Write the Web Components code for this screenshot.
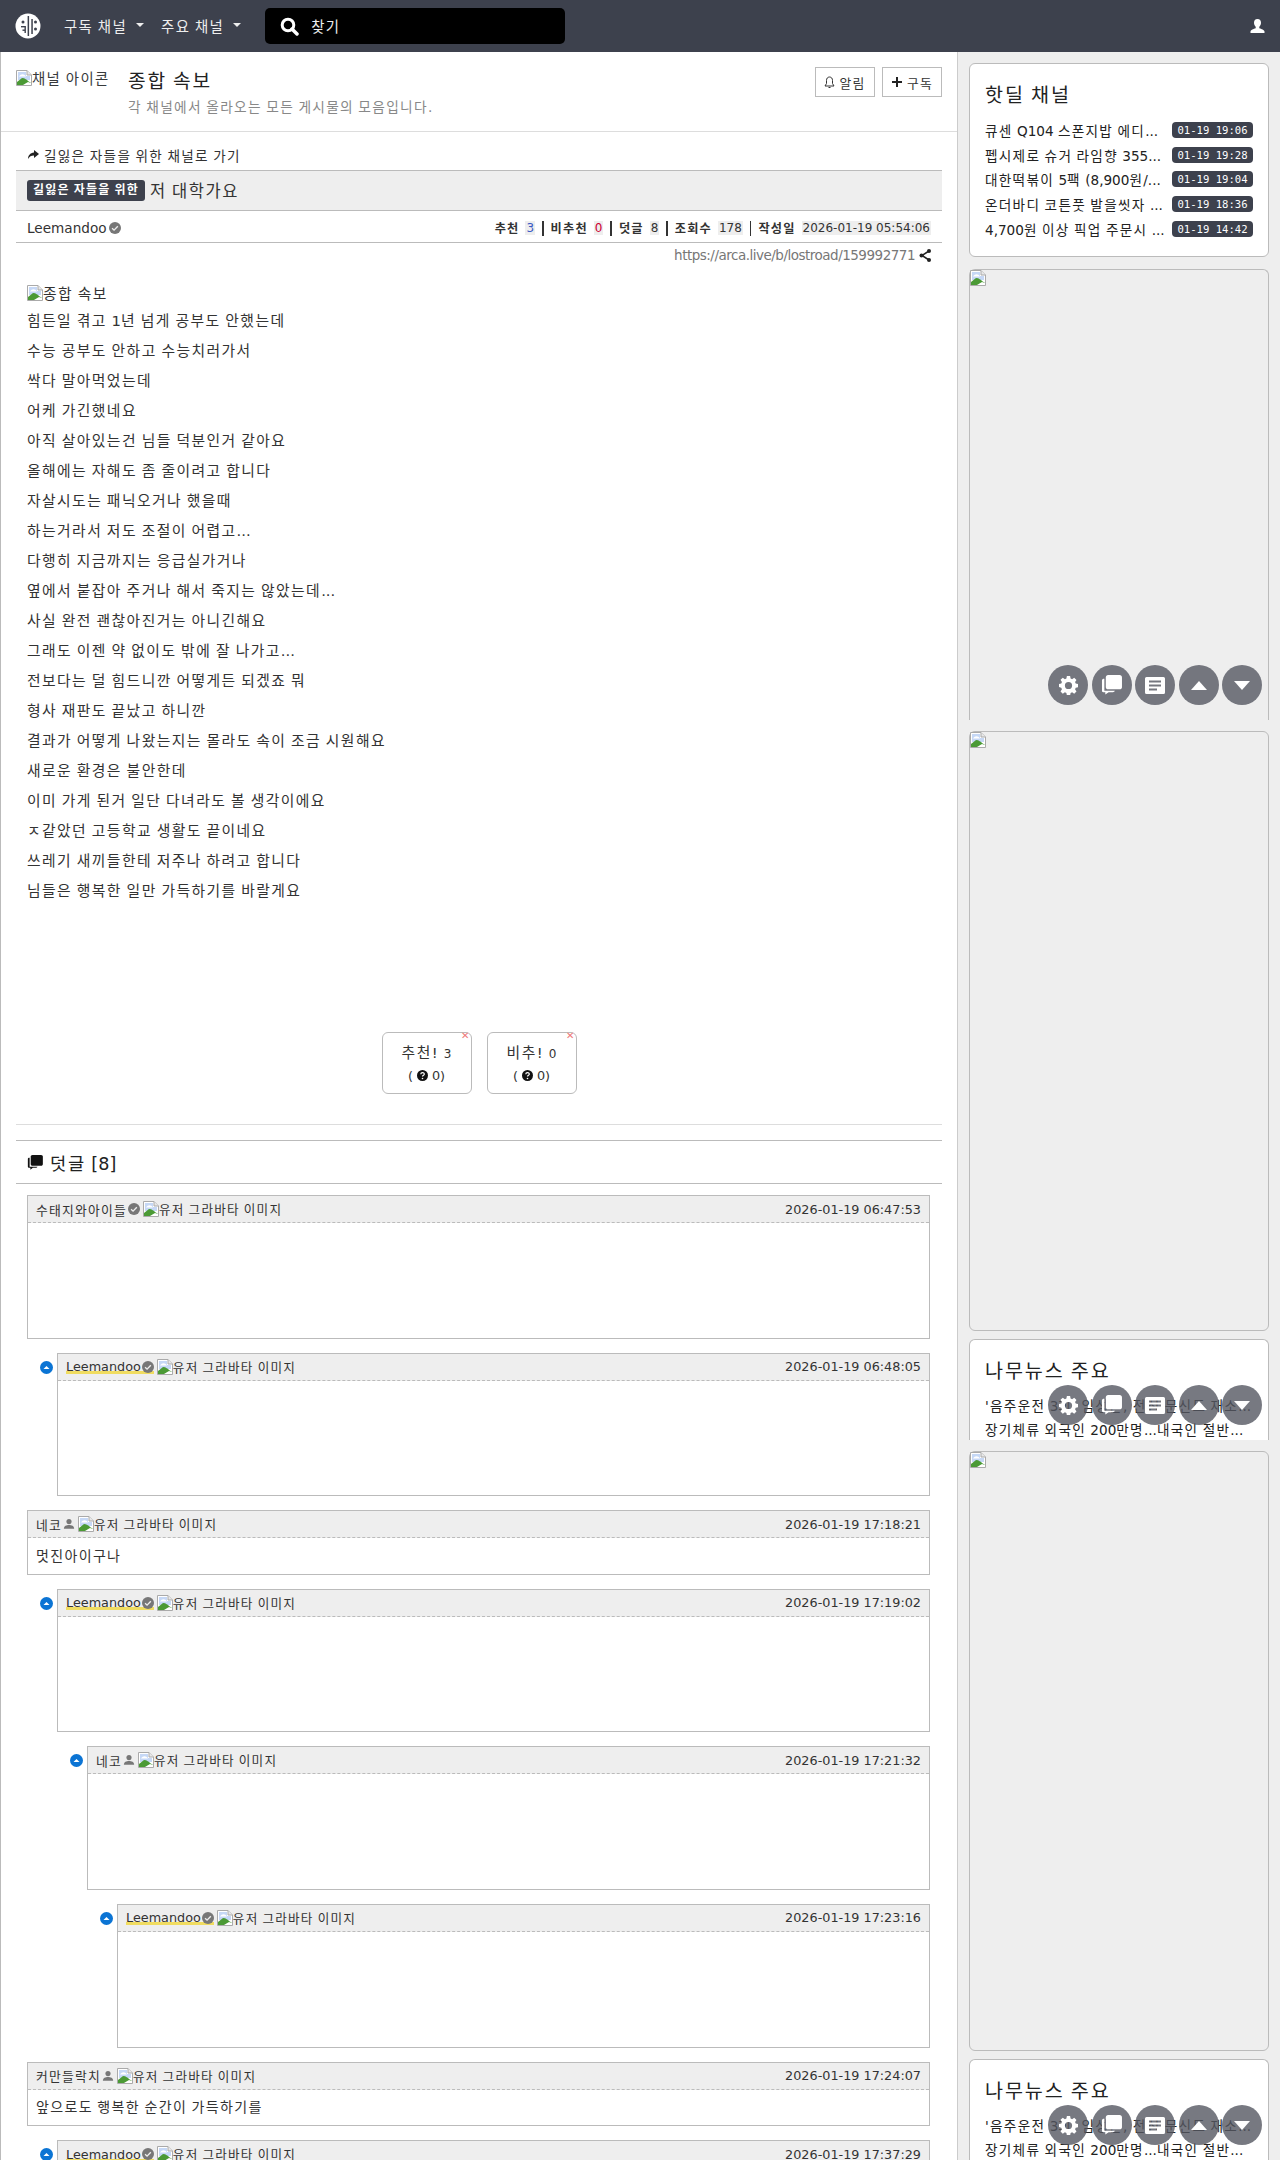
<!DOCTYPE html>
<html lang="ko">
<head>
<meta charset="utf-8">
<title>저 대학가요</title>
<style>
	html, body {
		margin: 0;
		height: 2160px;
		overflow: hidden;
		background: #eee;
		font-family: "DejaVu Sans", "Noto Sans CJK KR", sans-serif;
		font-size: 14px;
		color: #373a3c;
	}
	.lat { letter-spacing: 0; word-spacing: 0; }
</style>
</head>
<body>
<arca-page>
	<arca-topbar slot="top"></arca-topbar>

	<channel-head slot="main" title="종합 속보" sub="각 채널에서 올라오는 모든 게시물의 모음입니다."></channel-head>
	<article-head slot="main" channel="길잃은 자들을 위한" subject="저 대학가요" author="Leemandoo"
		up="3" down="0" replies="8" views="178" date="2026-01-19 05:54:06"
		url="https://arca.live/b/lostroad/159992771"></article-head>
	<article-body slot="main">
		<p class="pic"><broken-img alt="종합 속보" size="14.8"></broken-img></p>
		<p>힘든일 겪고 <span class="lat">1</span>년 넘게 공부도 안했는데</p>
		<p>수능 공부도 안하고 수능치러가서</p>
		<p>싹다 말아먹었는데</p>
		<p>어케 가긴했네요</p>
		<p>아직 살아있는건 님들 덕분인거 같아요</p>
		<p>올해에는 자해도 좀 줄이려고 합니다</p>
		<p>자살시도는 패닉오거나 했을때</p>
		<p>하는거라서 저도 조절이 어렵고<span class="lat">...</span></p>
		<p>다행히 지금까지는 응급실가거나</p>
		<p>옆에서 붙잡아 주거나 해서 죽지는 않았는데<span class="lat">...</span></p>
		<p>사실 완전 괜찮아진거는 아니긴해요</p>
		<p>그래도 이젠 약 없이도 밖에 잘 나가고<span class="lat">...</span></p>
		<p>전보다는 덜 힘드니깐 어떻게든 되겠죠 뭐</p>
		<p>형사 재판도 끝났고 하니깐</p>
		<p>결과가 어떻게 나왔는지는 몰라도 속이 조금 시원해요</p>
		<p>새로운 환경은 불안한데</p>
		<p>이미 가게 된거 일단 다녀라도 볼 생각이에요</p>
		<p>ㅈ같았던 고등학교 생활도 끝이네요</p>
		<p>쓰레기 새끼들한테 저주나 하려고 합니다</p>
		<p>님들은 행복한 일만 가득하기를 바랄게요</p>
	</article-body>
	<vote-row slot="main" up="3" down="0"></vote-row>
	<reply-head slot="main" count="8"></reply-head>
	<reply-list slot="main">
		<reply-item name="수태지와아이들" kind="check" date="2026-01-19 06:47:53"></reply-item>
		<reply-item name="Leemandoo" kind="check" depth="1" date="2026-01-19 06:48:05"></reply-item>
		<reply-item name="네코" kind="user" date="2026-01-19 17:18:21">멋진아이구나</reply-item>
		<reply-item name="Leemandoo" kind="check" depth="1" date="2026-01-19 17:19:02"></reply-item>
		<reply-item name="네코" kind="user" depth="2" date="2026-01-19 17:21:32"></reply-item>
		<reply-item name="Leemandoo" kind="check" depth="3" date="2026-01-19 17:23:16"></reply-item>
		<reply-item name="커만들락치" kind="user" date="2026-01-19 17:24:07">앞으로도 행복한 순간이 가득하기를</reply-item>
		<reply-item name="Leemandoo" kind="check" depth="1" date="2026-01-19 17:37:29"></reply-item>
	</reply-list>

	<side-card slot="side" heading="핫딜 채널" height="194" gap="12">
		<deal-row date="01-19 19:06">큐센 <span class="lat">Q104</span> 스폰지밥 에디<span class="lat">...</span></deal-row>
		<deal-row date="01-19 19:28">펩시제로 슈거 라임향 <span class="lat">355...</span></deal-row>
		<deal-row date="01-19 19:04">대한떡볶이 <span class="lat">5</span>팩 <span class="lat">(8,900</span>원<span class="lat">/...</span></deal-row>
		<deal-row date="01-19 18:36">온더바디 코튼풋 발을씻자 <span class="lat">...</span></deal-row>
		<deal-row date="01-19 14:42"><span class="lat">4,700</span>원 이상 픽업 주문시 <span class="lat">...</span></deal-row>
	</side-card>
	<side-ad slot="side" height="451" gap="11" cut></side-ad>
	<side-ad slot="side" height="600" gap="8"></side-ad>
	<side-card slot="side" heading="나무뉴스 주요" height="101" gap="11" cut>
		<news-row>'음주운전 <span class="lat">3</span>회' 임성근, 전신 문신도 재소<span class="lat">...</span></news-row>
		<news-row>장기체류 외국인 <span class="lat">200</span>만명<span class="lat">...</span>내국인 절반<span class="lat">...</span></news-row>
	</side-card>
	<side-ad slot="side" height="600" gap="8"></side-ad>
	<side-card slot="side" heading="나무뉴스 주요" height="101" gap="0" cut>
		<news-row>'음주운전 <span class="lat">3</span>회' 임성근, 전신 문신도 재소<span class="lat">...</span></news-row>
		<news-row>장기체류 외국인 <span class="lat">200</span>만명<span class="lat">...</span>내국인 절반<span class="lat">...</span></news-row>
	</side-card>

	<float-tools slot="over" top="665"></float-tools>
	<float-tools slot="over" top="1385"></float-tools>
	<float-tools slot="over" top="2105"></float-tools>
</arca-page>

<script>
// hangul in the reference runs about 1em wide, Noto CJK is .92em, so korean text gets this spacing
const KO = 'letter-spacing: .096em; word-spacing: -.096em;';

const BROKEN_ICON = `<svg width="16" height="16" viewBox="0 0 16 16" style="flex:none">
	<path d="M.5.5H11L15.500 5v10.500H.5z" fill="#fff" stroke="#aaa"/>
	<path d="M11 .5V5h4.500" fill="#e8e8e8" stroke="#aaa"/>
	<path d="M2 2h8v4h4v4H2z" fill="#c6d8f6"/>
	<path d="M3 6.500c2-3 5-3 7 0z" fill="#fff"/>
	<path d="M1 15v-3l5-4c3 0 5 2 6 3l3 2v2z" fill="#4b9a35"/>
	<path d="M7 15l5-3 3 1v2z" fill="#fff"/>
</svg>`;
const CHECK_ICON = `<svg width="12" height="12" viewBox="0 0 14 14" style="flex:none"><circle cx="7" cy="7" r="7" fill="#777"/><path d="M3.600 7.300l2.300 2.200 4.400-4.600" fill="none" stroke="#eee" stroke-width="1.600"/></svg>`;
const USER_ICON = `<svg width="12" height="12" viewBox="0 0 14 14" style="flex:none"><circle cx="7" cy="4.200" r="3" fill="#777"/><path d="M1 12.500c0-3 3-4.200 6-4.200s6 1.200 6 4.200z" fill="#777"/></svg>`;
const QUESTION_ICON = `<svg width="11" height="11" viewBox="0 0 11 11" style="flex:none"><circle cx="5.500" cy="5.500" r="5.500" fill="#111"/><path d="M3.800 4.200c0-2 3.500-2 3.500 0 0 1.200-1.800 1-1.800 2.400" fill="none" stroke="#fff" stroke-width="1.200"/><circle cx="5.500" cy="8.500" r=".8" fill="#fff"/></svg>`;
const BUBBLES = `<path d="M7.500 0H19.500C21 0 22 1 22 2.500V12.500C22 14 21 15 19.500 15H7.500C6 15 5 14 5 12.500V2.500C5 1 6 0 7.500 0z"/><path d="M1 5.500C1 4.700 1.700 4 3.500 4V16.500H14.500C14 17.500 13.500 18 12.500 18H8L4.500 20.500V18H2.500C1.500 18 1 17.500 1 16.500z"/>`;

function define(name, html, init) {
	customElements.define(name, class extends HTMLElement {
		constructor() {
			super();
			this.attachShadow({ mode: 'open' });
		}
		connectedCallback() {
			const attr = (key, fallback = '') => this.hasAttribute(key) ? this.getAttribute(key) : fallback;
			this.shadowRoot.innerHTML = html(attr);
			if (init) init(this);
		}
	});
}

define('arca-page', () => `
	<style>
		:host { display: block; position: relative; height: 2160px; overflow: hidden; }
		.cols { display: grid; grid-template-columns: 958px 1fr; }
		main { background: #fff; border-left: 1px solid #bbb; border-right: 1px solid #ccc; height: 2108px; overflow: hidden; }
		aside { padding: 11px 11px 0; height: 2097px; overflow: hidden; }
	</style>
	<slot name="top"></slot>
	<div class="cols">
		<main><slot name="main"></slot></main>
		<aside><slot name="side"></slot></aside>
	</div>
	<slot name="over"></slot>
`);

define('arca-topbar', () => `
	<style>
		:host { display: flex; align-items: center; height: 52px; background: #3d414d; color: #eee; font-size: 14.400px; }
		.logo { margin-left: 15px; width: 26px; height: 26px; flex: none; }
		.nav { display: flex; align-items: center; margin-left: 17px; padding-bottom: 2px; ${KO} }
		.nav::after { content: ""; margin-left: 9px; border: 4px solid transparent; border-top-color: #eee; border-bottom: 0; }
		.logo + .nav { margin-left: 23px; }
		.find { display: flex; align-items: center; gap: 12px; width: 300px; height: 36px; margin-left: 24px; padding: 0 0 0 15px; box-sizing: border-box; background: #000; border-radius: 5px; ${KO} }
		.find span { padding-bottom: 2px; }
		.me { margin-left: auto; margin-right: 15px; }
	</style>
	<svg class="logo" viewBox="0 0 26 26">
		<circle cx="13" cy="13" r="12.500" fill="#fff"/>
		<g fill="#3d414d">
			<rect x="12.600" y="3" width="1.500" height="20"/>
			<rect x="16.300" y="6" width="1.500" height="15"/>
			<rect x="9.500" y="13" width="1.400" height="7"/>
			<rect x="6" y="13" width="4" height="1.400"/>
			<rect x="7.500" y="16.500" width="2.500" height="1.400"/>
			<circle cx="8" cy="9" r="1.500"/>
			<circle cx="20.500" cy="9" r="1.500"/>
			<circle cx="20.500" cy="16" r="1.500"/>
		</g>
	</svg>
	<span class="nav">구독 채널</span>
	<span class="nav">주요 채널</span>
	<div class="find">
		<svg width="19" height="19" viewBox="0 0 19 19"><circle cx="8" cy="8" r="5.800" fill="none" stroke="#fff" stroke-width="3"/><path d="M12 12l5 5" stroke="#fff" stroke-width="3.500" stroke-linecap="round"/></svg>
		<span>찾기</span>
	</div>
	<svg class="me" width="15" height="15" viewBox="0 0 15 15"><path d="M7.500 0c2.400 0 3.500 1.700 3.500 3.800 0 1.700-.8 3.200-1.700 4v1.400c2 .7 5.200 1.600 5.200 3.300V14H.5v-1.500c0-1.700 3.200-2.600 5.200-3.300V7.800c-.9-.8-1.700-2.300-1.700-4C4 1.700 5.100 0 7.500 0z" fill="#fff"/></svg>
`);

define('broken-img', attr => `
	<style>
		:host { display: inline-flex; align-items: flex-start; line-height: 16px; font-size: ${attr('size', '12.600')}px; ${KO} }
		span { position: relative; top: 1px; }
	</style>
	${BROKEN_ICON}<span>${attr('alt')}</span>
`);

define('channel-head', attr => `
	<style>
		:host { display: flex; height: 80px; box-sizing: border-box; border-bottom: 1px solid #ddd; padding: 15px 15px 0; }
		.icon { width: 96px; height: 18px; margin-top: 3px; overflow: hidden; white-space: nowrap; flex: none; }
		.txt { margin-left: 16px; flex: 1; }
		.title { font-size: 19.200px; line-height: 30px; color: #222; ${KO} }
		.sub { font-size: 13.700px; line-height: 20px; color: #888; ${KO} }
		.btns { display: flex; gap: 7px; }
		.btn { display: flex; align-items: center; justify-content: center; gap: 4px; width: 60px; height: 30px; box-sizing: border-box; border: 1px solid #bbb; font-size: 12.800px; color: #333; background: #fff; ${KO} }
	</style>
	<div class="icon"><broken-img alt="채널 아이콘" size="14.400"></broken-img></div>
	<div class="txt"><div class="title">${attr('title')}</div><div class="sub">${attr('sub')}</div></div>
	<div class="btns">
		<span class="btn"><svg width="11" height="13" viewBox="0 0 11 13"><path d="M5.500 1c-2 0-3 1.500-3 3.500v3L1 10h9L8.500 7.500v-3C8.500 2.500 7.500 1 5.500 1z" fill="none" stroke="#333"/><path d="M4.500 11.500h2" stroke="#333"/></svg>알림</span>
		<span class="btn"><svg width="12" height="12" viewBox="0 0 12 12"><path d="M6 1v10M1 6h10" stroke="#222" stroke-width="2"/></svg>구독</span>
	</div>
`);

define('article-head', attr => `
	<style>
		:host { display: block; margin: 0 15px; }
		.back { display: flex; align-items: center; gap: 5px; height: 38px; box-sizing: border-box; padding: 7px 0 0 11px; font-size: 13.600px; color: #333; ${KO} }
		.title { display: flex; align-items: center; gap: 5px; height: 41px; box-sizing: border-box; padding-left: 11px; background: #eee; border-top: 1px solid #bbb; border-bottom: 1px solid #bbb; font-size: 16.500px; color: #333; ${KO} }
		.title span:last-child { padding-bottom: 2px; }
		.badge { background: #3d414d; color: #fff; border-radius: 3px; font-size: 12px; font-weight: 700; line-height: 21px; padding: 0 6px; ${KO} }
		.info { display: flex; align-items: center; height: 32px; box-sizing: border-box; padding: 3px 11px 0; border-bottom: 1px solid #bbb; font-size: 12px; color: #333; }
		.who { display: flex; align-items: center; gap: 2px; font-size: 13.600px; margin-right: auto; }
		b { font-size: 12.200px; margin-right: 6px; ${KO} }
		i { font-style: normal; background: #eee; padding: 0 1px; }
		.sep { width: 1.500px; height: 15px; background: #333; margin: 0 7px; }
		.blue { color: #3b5bc5; } .red { color: #c03; }
		.url { display: flex; justify-content: flex-end; align-items: center; gap: 4px; height: 24px; padding-right: 11px; font-size: 13.500px; color: #777; letter-spacing: -.5px; }
	</style>
	<div class="back"><svg width="12" height="10" viewBox="0 0 12 10"><path d="M7 0l5 4-5 4V5.500C4 5.500 2.500 6.500 1 9c0-3.500 2-6 6-6.500z" fill="#222"/></svg><span>길잃은 자들을 위한 채널로 가기</span></div>
	<div class="title"><span class="badge">${attr('channel')}</span><span>${attr('subject')}</span></div>
	<div class="info">
		<span class="who">${attr('author')}${CHECK_ICON}</span>
		<b>추천</b><i class="blue">${attr('up')}</i><span class="sep"></span>
		<b>비추천</b><i class="red">${attr('down')}</i><span class="sep"></span>
		<b>덧글</b><i>${attr('replies')}</i><span class="sep"></span>
		<b>조회수</b><i>${attr('views')}</i><span class="sep"></span>
		<b>작성일</b><i>${attr('date')}</i>
	</div>
	<div class="url"><span>${attr('url')}</span><svg width="12" height="13" viewBox="0 0 12 13"><path d="M10 2L3 6.500l7 4.500" fill="none" stroke="#222" stroke-width="1.500"/><circle cx="10" cy="2" r="2" fill="#222"/><circle cx="2.500" cy="6.500" r="2" fill="#222"/><circle cx="10" cy="11" r="2" fill="#222"/></svg></div>
`);

define('article-body', () => `
	<style>
		:host { display: block; padding: 18px 26px 0; height: 765px; box-sizing: border-box; color: #333; }
		::slotted(p) { margin: 0; height: 30px; line-height: 30px; font-size: 14.800px; white-space: nowrap; ${KO} }
		::slotted(p.pic) { height: 21px; line-height: 16px; }
	</style>
	<slot></slot>
`);

define('vote-row', attr => `
	<style>
		:host { display: flex; justify-content: center; gap: 15px; height: 93px; margin: 0 15px; box-sizing: border-box; border-bottom: 1px solid #ddd; }
		.v { position: relative; width: 90px; height: 62px; box-sizing: border-box; border: 1px solid #bbb; border-radius: 6px; text-align: center; padding-top: 8px; font-size: 14.800px; color: #333; }
		.l { ${KO} }
		small { font-size: 12px; }
		.n { display: flex; justify-content: center; align-items: center; gap: 4px; font-size: 12.800px; margin-top: 6px; }
		.x { position: absolute; right: 1px; top: -2px; color: #e77; font-size: 10px; line-height: 10px; }
	</style>
	<div class="v"><span class="l">추천!</span> <small>${attr('up')}</small><div class="n">(${QUESTION_ICON}0)</div><span class="x">✕</span></div>
	<div class="v"><span class="l">비추!</span> <small>${attr('down')}</small><div class="n">(${QUESTION_ICON}0)</div><span class="x">✕</span></div>
`);

define('reply-head', attr => `
	<style>
		:host { display: flex; align-items: center; gap: 7px; height: 44px; margin: 15px 15px 0; padding-left: 11px; box-sizing: border-box; border-top: 1px solid #bbb; border-bottom: 1px solid #bbb; font-size: 17.600px; color: #222; }
		.t { ${KO} }
	</style>
	<svg width="16" height="15" viewBox="0 0 22 21" fill="#111">${BUBBLES}</svg>
	<span><span class="t">덧글</span> [${attr('count')}]</span>
`);

define('reply-list', () => `
	<style>:host { display: block; margin: 11px 27px 0 26px; }</style>
	<slot></slot>
`);

define('reply-item', attr => {
	const depth = Number(attr('depth', '0'));
	const name = attr('name');
	const isKo = /[가-힣]/.test(name);
	return `
	<style>
		:host { display: flex; margin-bottom: 14px; }
		.gutter { flex: none; width: ${depth * 30}px; display: ${depth ? 'flex' : 'none'}; justify-content: flex-end; padding-top: 8px; box-sizing: border-box; }
		.gutter svg { margin-right: 4px; }
		.box { flex: 1; border: 1px solid #bbb; background: #fff; }
		.top { display: flex; align-items: center; height: 27px; box-sizing: border-box; padding: 0 8px; background: #eee; border-bottom: 1px dashed #bbb; font-size: 12.800px; color: #333; }
		.name { display: inline-flex; align-items: center; gap: 1px; margin-right: 3px; ${isKo ? KO : ''} }
		.name.mine { background: linear-gradient(transparent 80%, #f0dc60 80%); }
		.date { margin-left: auto; }
		.text { padding: 7.800px 8px; line-height: 20px; font-size: 14px; color: #333; ${KO} }
		.blank { height: 114.600px; }
	</style>
	<div class="gutter"><svg width="13" height="13" viewBox="0 0 13 13"><circle cx="6.500" cy="6.500" r="6.500" fill="#0b74d4"/><path d="M3.500 8h6L6.500 5z" fill="#fff"/></svg></div>
	<div class="box">
		<div class="top">
			<span class="name ${name === 'Leemandoo' ? 'mine' : ''}">${name}${attr('kind') === 'user' ? USER_ICON : CHECK_ICON}</span>
			<broken-img alt="유저 그라바타 이미지"></broken-img>
			<span class="date">${attr('date')}</span>
		</div>
		<div class="body"><div class="text"><slot></slot></div></div>
	</div>`;
}, el => {
	if (!el.textContent.trim()) {
		const body = el.shadowRoot.querySelector('.body');
		body.className = 'blank';
		body.innerHTML = '';
	}
});

define('side-card', attr => `
	<style>
		:host { display: block; height: ${attr('height')}px; margin-bottom: ${attr('gap')}px; box-sizing: border-box; overflow: hidden; background: #fff; border: 1px solid #bbb; border-radius: 6px; ${attr('cut', null) !== null ? 'border-bottom: 0; border-radius: 6px 6px 0 0;' : ''} padding: 17.500px 15px 0; }
		h3 { margin: 0 0 8.100px; font-weight: 400; font-size: 19.600px; line-height: 28px; color: #222; ${KO} }
	</style>
	<h3>${attr('heading')}</h3>
	<slot></slot>
`);

define('deal-row', attr => `
	<style>
		:host { display: flex; align-items: center; justify-content: space-between; height: 24.700px; font-size: 13.600px; color: #222; }
		.t { white-space: nowrap; ${KO} }
		.d { width: 81px; text-align: center; background: #3d414d; color: #fff; border-radius: 4px; font: 10.600px/16px "DejaVu Sans Mono", monospace; }
	</style>
	<span class="t"><slot></slot></span><span class="d">${attr('date')}</span>
`);

define('news-row', () => `
	<style>
		:host { display: block; height: 24px; line-height: 24px; white-space: nowrap; font-size: 13.600px; color: #222; ${KO} }
	</style>
	<slot></slot>
`);

define('side-ad', attr => `
	<style>
		:host { display: block; height: ${attr('height')}px; margin-bottom: ${attr('gap')}px; box-sizing: border-box; background: #eee; border: 1px solid #bbb; border-radius: 6px; ${attr('cut', null) !== null ? 'border-bottom: 0; border-radius: 6px 6px 0 0;' : ''} line-height: 0; }
	</style>
	${BROKEN_ICON}
`);

define('float-tools', attr => `
	<style>
		:host { position: absolute; left: 1048px; top: ${attr('top')}px; display: flex; gap: 3.500px; }
		span { width: 40px; height: 40px; border-radius: 50%; background: rgba(85, 87, 98, .8); display: flex; align-items: center; justify-content: center; }
	</style>
	<span><svg width="19" height="19" viewBox="0 0 20 20"><path fill="#fff" fill-rule="evenodd" d="M8.300 0h3.400l.5 2.600 1.600.7 2.200-1.500 2.400 2.400-1.500 2.200.7 1.600 2.400.5v3.400l-2.400.5-.7 1.600 1.500 2.200-2.400 2.400-2.200-1.500-1.600.7-.5 2.700H8.300l-.5-2.700-1.600-.7-2.200 1.500-2.400-2.400 1.500-2.200-.7-1.600L0 11.700V8.300l2.400-.5.7-1.600-1.500-2.200L4 1.800l2.200 1.500 1.600-.7zM10 6.200a3.800 3.800 0 1 0 0 7.600 3.800 3.800 0 0 0 0-7.600z"/></svg></span>
	<span><svg width="21" height="20" viewBox="0 0 22 21" fill="#fff">${BUBBLES}</svg></span>
	<span><svg width="20" height="17" viewBox="0 0 20 17"><path fill="#fff" fill-rule="evenodd" d="M1.500 0h17A1.500 1.500 0 0 1 20 1.500v14a1.500 1.500 0 0 1-1.500 1.500h-17A1.500 1.500 0 0 1 0 15.500v-14A1.500 1.500 0 0 1 1.500 0zM4 3.500v2h12v-2zM4 7.500v2h12v-2zM4 11.500v2h8v-2z"/></svg></span>
	<span><svg width="16" height="9" viewBox="0 0 16 9"><path fill="#fff" d="M8 0l8 9H0z"/></svg></span>
	<span><svg width="16" height="9" viewBox="0 0 16 9"><path fill="#fff" d="M8 9L0 0h16z"/></svg></span>
`);
</script>
</body>
</html>
